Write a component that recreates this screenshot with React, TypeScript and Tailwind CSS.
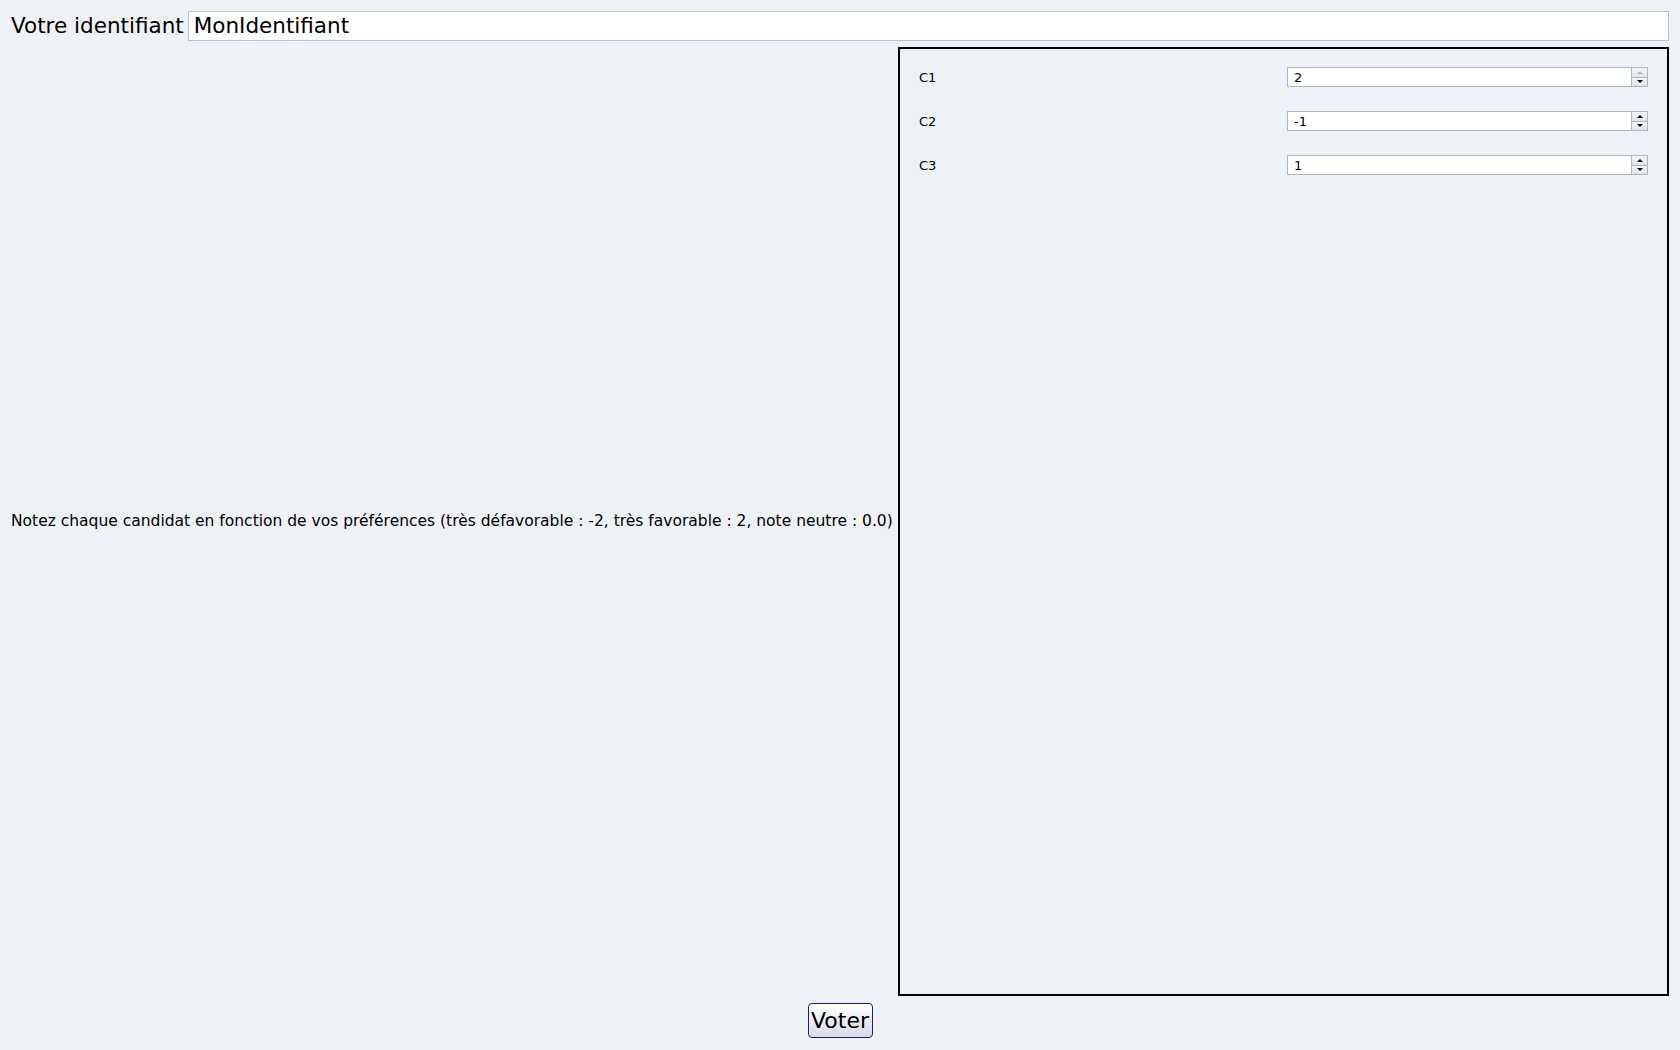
import React from 'react'

const FONT = { fontFamily: '"DejaVu Sans", Verdana, sans-serif' }

const CANDIDATS = [
  { name: 'C1', value: '2', upDisabled: true },
  { name: 'C2', value: '-1', upDisabled: false },
  { name: 'C3', value: '1', upDisabled: false },
]

function Spinner({ upDisabled }: { upDisabled: boolean }) {
  return (
    <div className="flex flex-col w-[16px] h-[20px] border border-[#aab6c8] border-l-0">
      <div className="flex-1 flex items-center justify-center bg-gradient-to-b from-[#f4f6f9] to-[#dfe4ea] border-b border-[#aab6c8]">
        <span className={`block w-0 h-0 border-l-[3px] border-r-[3px] border-b-[3px] border-l-transparent border-r-transparent ${upDisabled ? 'border-b-[#b8bec8]' : 'border-b-black'}`} />
      </div>
      <div className="flex-1 flex items-center justify-center bg-gradient-to-b from-[#f4f6f9] to-[#dfe4ea]">
        <span className="block w-0 h-0 border-l-[3px] border-r-[3px] border-t-[3px] border-l-transparent border-r-transparent border-t-black" />
      </div>
    </div>
  )
}

export default function App() {
  return (
    <div className="w-[1680px] h-[1050px] bg-[#eef2f7] text-black flex flex-col overflow-hidden" style={FONT}>
      {/* Identifiant */}
      <div className="flex items-center pl-[11px] pr-[11px] pt-[11px] gap-[4px]">
        <span className="text-[21.5px] leading-none whitespace-nowrap">Votre identifiant</span>
        <input
          readOnly
          value="MonIdentifiant"
          className="flex-1 h-[30px] bg-white border border-[#b7c3d4] px-[5px] text-[21.5px] outline-none"
          style={FONT}
        />
      </div>

      {/* Middle */}
      <div className="flex mt-[6px] h-[949px]">
        <div className="w-[898px] flex items-center pl-[11px] overflow-hidden">
          <span className="text-[15.5px] whitespace-nowrap">
            Notez chaque candidat en fonction de vos préférences (très défavorable : -2, très favorable : 2, note neutre : 0.0)
          </span>
        </div>
        <div className="w-[771px] border-2 border-black pt-[18px] flex flex-col gap-[24px]">
          {CANDIDATS.map(c => (
            <div key={c.name} className="flex items-center h-[20px] pl-[19px] pr-[19px]">
              <span className="w-[368px] text-[13px] leading-none">{c.name}</span>
              <div className="flex flex-1">
                <input
                  readOnly
                  value={c.value}
                  className="flex-1 h-[20px] bg-white border border-[#aab6c8] px-[6px] text-[13px] outline-none"
                  style={FONT}
                />
                <Spinner upDisabled={c.upDisabled} />
              </div>
            </div>
          ))}
        </div>
      </div>

      {/* Voter */}
      <div className="flex justify-center mt-[7px]">
        <button
          className="w-[65px] h-[35px] rounded-[4px] border border-[#1c1f6b] bg-gradient-to-b from-white to-[#d7dce4] text-[22px] leading-none"
          style={FONT}
        >
          Voter
        </button>
      </div>
    </div>
  )
}
